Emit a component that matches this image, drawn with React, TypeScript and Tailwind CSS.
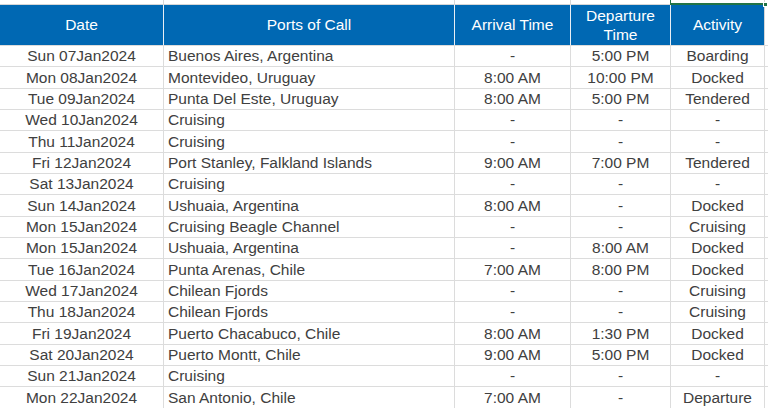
import React from 'react'

type Row = [string, string, string, string, string]

const ROWS: Row[] = [
  ['Sun 07Jan2024', 'Buenos Aires, Argentina', '-', '5:00 PM', 'Boarding'],
  ['Mon 08Jan2024', 'Montevideo, Uruguay', '8:00 AM', '10:00 PM', 'Docked'],
  ['Tue 09Jan2024', 'Punta Del Este, Uruguay', '8:00 AM', '5:00 PM', 'Tendered'],
  ['Wed 10Jan2024', 'Cruising', '-', '-', '-'],
  ['Thu 11Jan2024', 'Cruising', '-', '-', '-'],
  ['Fri 12Jan2024', 'Port Stanley, Falkland Islands', '9:00 AM', '7:00 PM', 'Tendered'],
  ['Sat 13Jan2024', 'Cruising', '-', '-', '-'],
  ['Sun 14Jan2024', 'Ushuaia, Argentina', '8:00 AM', '-', 'Docked'],
  ['Mon 15Jan2024', 'Cruising Beagle Channel', '-', '-', 'Cruising'],
  ['Mon 15Jan2024', 'Ushuaia, Argentina', '-', '8:00 AM', 'Docked'],
  ['Tue 16Jan2024', 'Punta Arenas, Chile', '7:00 AM', '8:00 PM', 'Docked'],
  ['Wed 17Jan2024', 'Chilean Fjords', '-', '-', 'Cruising'],
  ['Thu 18Jan2024', 'Chilean Fjords', '-', '-', 'Cruising'],
  ['Fri 19Jan2024', 'Puerto Chacabuco, Chile', '8:00 AM', '1:30 PM', 'Docked'],
  ['Sat 20Jan2024', 'Puerto Montt, Chile', '9:00 AM', '5:00 PM', 'Docked'],
  ['Sun 21Jan2024', 'Cruising', '-', '-', '-'],
  ['Mon 22Jan2024', 'San Antonio, Chile', '7:00 AM', '-', 'Departure'],
]

// column widths include the 1px right gridline
const COLS = ['w-[164px]', 'w-[291px]', 'w-[116px]', 'w-[100px]', 'w-[94px]']

export default function App() {
  return (
    <div
      className="w-[768px] h-[408px] overflow-hidden bg-white text-[15.5px] text-[#404040]"
      style={{ fontFamily: '"Liberation Sans", Arial, sans-serif' }}
    >
      {/* strip of the row above the table */}
      <div className="flex h-[5px] border-b border-[#d6d6d6]">
        {COLS.map((w, i) => (
          <div key={i} className={`${w} shrink-0 border-r border-[#d6d6d6] relative`}>
            {i === 4 && (
              <div className="absolute -left-px -top-px -right-px -bottom-px border-l border-b-2 border-[#217346]">
                <div className="absolute -right-[3px] -bottom-[4px] h-[5px] w-[5px] bg-[#217346] border border-white" />
              </div>
            )}
          </div>
        ))}
      </div>

      {/* header */}
      <div className="flex h-[41px] border-b border-[#dcdcdc]">
        <div className={`${COLS[0]} shrink-0 bg-[#0068b3] border-r border-[#e9eef4] text-white flex items-center justify-center`}>
          Date
        </div>
        <div className={`${COLS[1]} shrink-0 bg-[#0068b3] border-r border-[#e9eef4] text-white flex items-center justify-center`}>
          Ports of Call
        </div>
        <div className={`${COLS[2]} shrink-0 bg-[#0068b3] border-r border-[#e9eef4] text-white flex items-center justify-center`}>
          Arrival Time
        </div>
        <div className={`${COLS[3]} shrink-0 bg-[#0068b3] border-r border-[#e9eef4] text-white flex flex-col items-center justify-center leading-[19px]`}>
          <span>Departure</span>
          <span>Time</span>
        </div>
        <div className={`${COLS[4]} shrink-0 bg-[#0068b3] border-r border-[#d6d6d6] text-white flex items-center justify-center`}>
          Activity
        </div>
      </div>

      {/* data rows */}
      {ROWS.map((r, i) => (
        <div key={i} className="flex h-[21.33px] border-b border-[#dcdcdc] leading-none">
          <div className={`${COLS[0]} shrink-0 border-r border-[#dcdcdc] flex items-center justify-center`}>{r[0]}</div>
          <div className={`${COLS[1]} shrink-0 border-r border-[#dcdcdc] flex items-center pl-[4px] whitespace-nowrap`}>{r[1]}</div>
          <div className={`${COLS[2]} shrink-0 border-r border-[#dcdcdc] flex items-center justify-center`}>{r[2]}</div>
          <div className={`${COLS[3]} shrink-0 border-r border-[#dcdcdc] flex items-center justify-center`}>{r[3]}</div>
          <div className={`${COLS[4]} shrink-0 border-r border-[#dcdcdc] flex items-center justify-center`}>{r[4]}</div>
        </div>
      ))}
    </div>
  )
}
